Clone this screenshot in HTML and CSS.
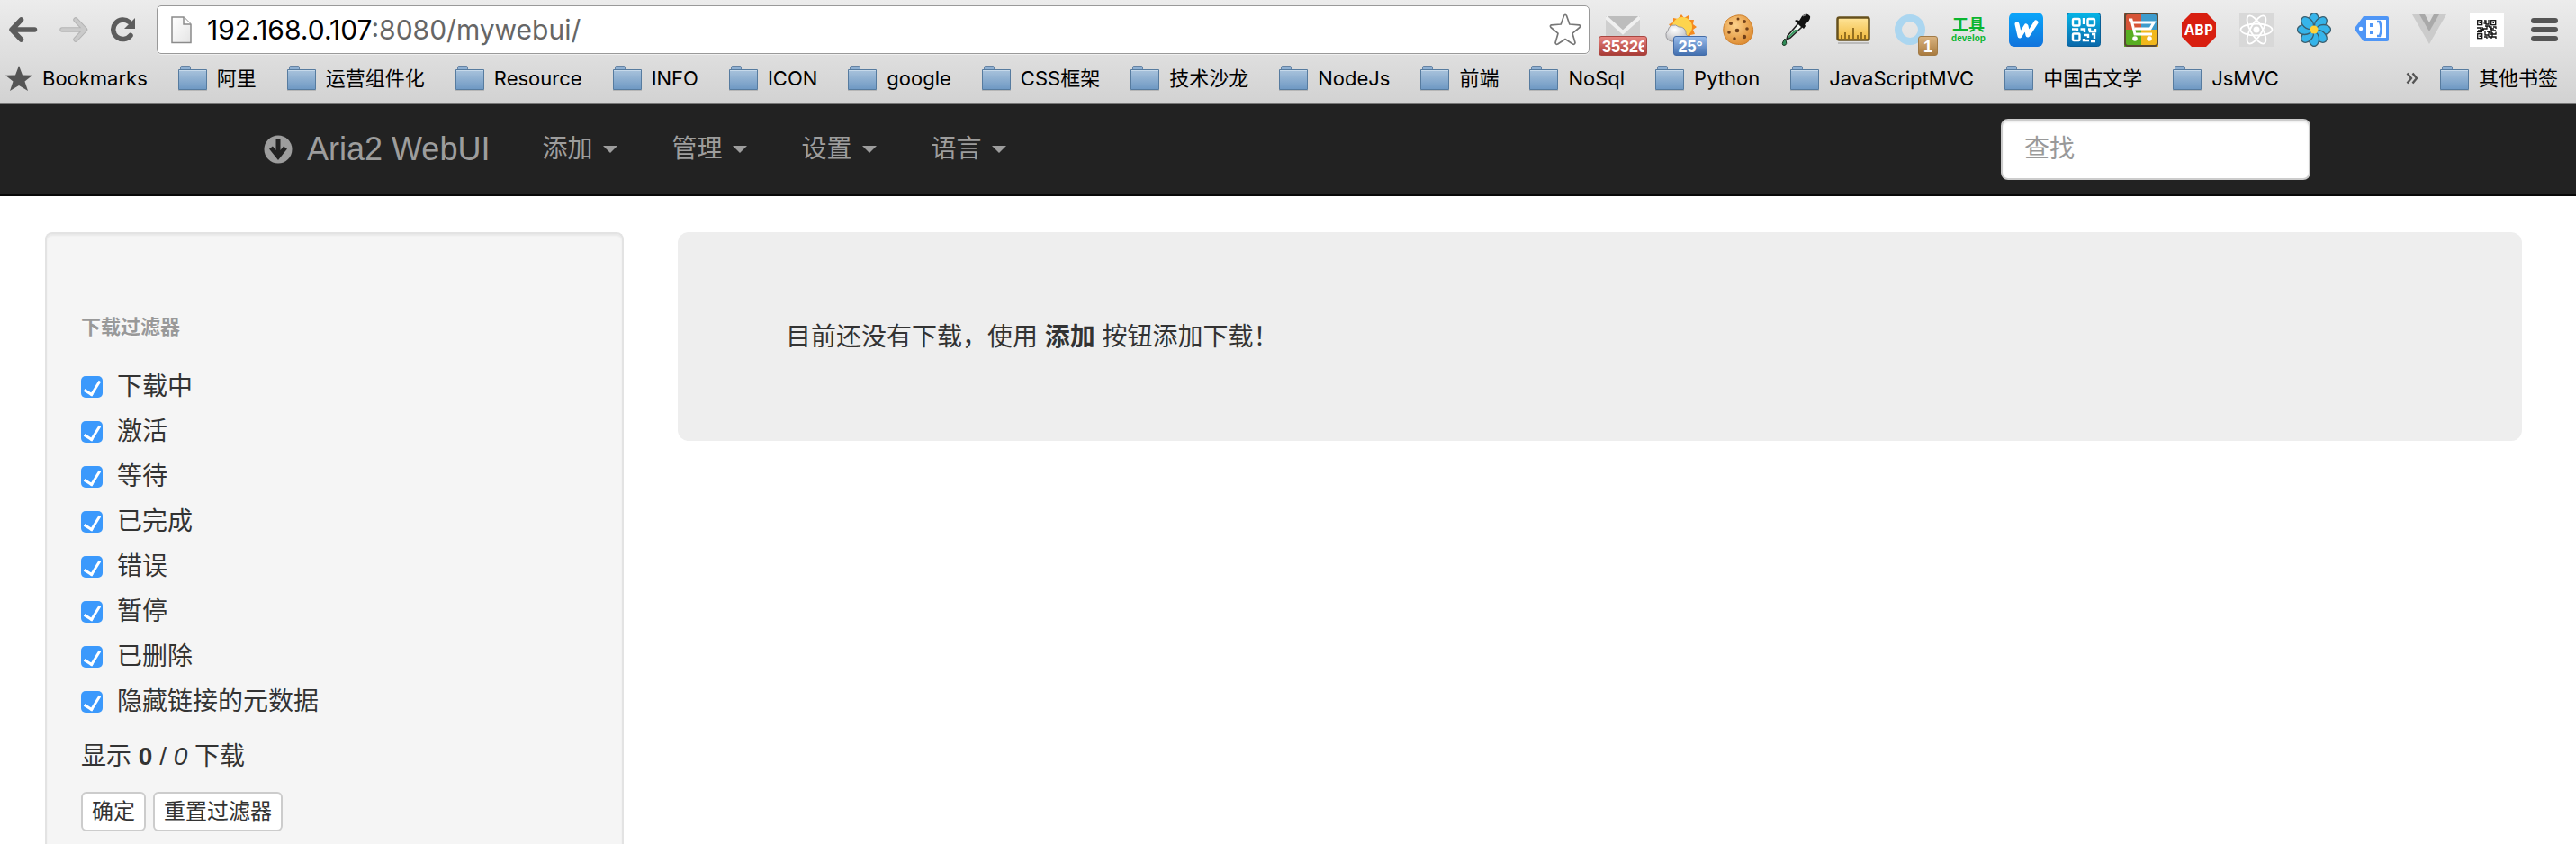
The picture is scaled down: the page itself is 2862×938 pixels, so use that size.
FILE: index.html
```html
<!DOCTYPE html>
<html lang="zh-CN">
<head>
<meta charset="utf-8">
<title>Aria2 WebUI</title>
<link rel="stylesheet" href="styles.css">
</head>
<body>
<svg class="defs" aria-hidden="true">
  <defs>
    <linearGradient id="folder-fill" x1="0" y1="0" x2="0" y2="1"><stop offset="0" stop-color="#a9c3dc"/><stop offset="1" stop-color="#6e98c3"/></linearGradient>
    <linearGradient id="blue-fill" x1="0" y1="0" x2="0" y2="1"><stop offset="0" stop-color="#0aa6fa"/><stop offset="1" stop-color="#1173dc"/></linearGradient>
    <linearGradient id="teal-fill" x1="0" y1="0" x2="0" y2="1"><stop offset="0" stop-color="#06b4e6"/><stop offset="1" stop-color="#0a68aa"/></linearGradient>
    <linearGradient id="page-fill" x1="0" y1="0" x2="1" y2="1"><stop offset="0" stop-color="#fff"/><stop offset="1" stop-color="#e4e4e4"/></linearGradient>
    <linearGradient id="gold-fill" x1="0" y1="0" x2="0" y2="1"><stop offset="0" stop-color="#ffe59a"/><stop offset="1" stop-color="#f0b93c"/></linearGradient>
    <radialGradient id="cookie-fill" cx=".4" cy=".35" r=".7"><stop offset="0" stop-color="#fcd18a"/><stop offset="1" stop-color="#dd8a2f"/></radialGradient>
    <radialGradient id="cloud-fill" cx=".4" cy=".3" r=".8"><stop offset="0" stop-color="#fff"/><stop offset="1" stop-color="#b4b4b8"/></radialGradient>
    <symbol id="folder" viewBox="0 0 32 28">
      <path d="M2.500 5V2Q2.500 .5 4 .5H12Q13.500 .5 13.500 2V5Z" fill="#8fb0d2" stroke="#6683a3"/>
      <path d="M.5 4.500H31.500V26.500H.5Z" fill="url(#folder-fill)" stroke="#567b9f"/>
      <path d="M1 5.500H31" stroke="#c6d9ea"/><path d="M0 27.500H32" stroke="#aaa" opacity=".7"/>
    </symbol>
  </defs>
</svg>

<header class="browser">
  <div class="toolbar">
    <div class="history">
      <button type="button" class="tool" aria-label="后退"><svg width="32" height="28" viewBox="0 0 32 28"><path d="M13.500 3 3 14 13.500 25M4 14H28.500" fill="none" stroke="#5c5c5c" stroke-width="5.500" stroke-linecap="round" stroke-linejoin="round"/></svg></button>
      <button type="button" class="tool" aria-label="前进"><svg width="32" height="28" viewBox="0 0 32 28"><path d="M18 3 28.500 14 18 25M28 14H3" fill="none" stroke="#b4b4b4" stroke-width="5.500" stroke-linecap="round" stroke-linejoin="round"/><path d="M18 3 28.500 14 18 25M28 14H3" fill="none" stroke="#cacaca" stroke-width="3.500" stroke-linecap="round" stroke-linejoin="round"/></svg></button>
      <button type="button" class="tool" aria-label="重新加载"><svg width="30" height="28" viewBox="0 0 30 28"><path d="M23 20.500A10.800 10.800 0 1 1 21.500 5.500" fill="none" stroke="#5c5c5c" stroke-width="5.500" stroke-linecap="round"/><path d="M28 1V13H16Z" fill="#5c5c5c"/></svg></button>
    </div>
    <div class="address">
      <svg width="23" height="31" viewBox="0 0 23 31"><path d="M1 1H14L22 9V29.500H1Z" fill="url(#page-fill)" stroke="#8b8b8b" stroke-width="1.500"/><path d="M14 1V9H22" fill="#fff" stroke="#8b8b8b" stroke-width="1.500"/></svg>
      <div class="url"><span class="url-host">192.168.0.107</span>:8080/mywebui/</div>
      <button type="button" class="tool" aria-label="添加书签"><svg width="36" height="36" viewBox="0 0 36 36"><path d="M16.500 2.500Q18 0 19.500 2.500L22.800 12 33.500 12.800Q35.500 13.800 34 15.500L26 22.200 29 32.500Q28.500 35 26.300 34L18 28.500 9.700 34Q7.500 35 7 32.500L10 22.200 2 15.500Q.5 13.800 2.500 12.800L13.200 12Z" fill="#fff" stroke="#777" stroke-width="1.700" stroke-linejoin="round"/></svg></button>
    </div>
    <div class="extensions">
      <button type="button" class="ext" aria-label="邮件"><svg width="38" height="38" viewBox="0 0 38 38"><path d="M0 4H38V34H0Z" fill="#cfcfcf"/><path d="M0 4H38L19 22Z" fill="#bdbdbd"/><path d="M0 5 19 22 38 5" fill="none" stroke="#f0f0f0" stroke-width="4"/></svg><span class="badge badge-red"><span class="badge-count">35326</span></span></button>
      <button type="button" class="ext" aria-label="天气"><svg width="38" height="38" viewBox="0 0 38 38"><path d="M20 2l3 4 5-3 1 5 5 0-1 5 4 3-4 3 2 5-5 1-1 5-5-2-4 3-4-4-5 1 0-5-5-2 3-4-3-4 5-2 0-5 5 1Z" fill="#f58a1f"/><circle cx="21" cy="16" r="11" fill="#fdd44e"/><path d="M9 32A7 7 0 0 1 5 20 7 7 0 0 1 17 16 7 7 0 0 1 25 24 5 5 0 0 1 25 32Z" fill="url(#cloud-fill)" stroke="#9a9a9e"/></svg><span class="badge badge-blue">25°</span></button>
      <button type="button" class="ext" aria-label="Cookie"><svg width="38" height="38" viewBox="0 0 38 38"><path d="M18 3C25 2 30 5 33 11 37 18 36 24 33 29 28 36 22 36 16 35 8 34 4 28 3 22 2 14 5 5 18 3Z" fill="url(#cookie-fill)" stroke="#cd7f2c"/><g fill="#70401a"><circle cx="11" cy="12" r="2"/><circle cx="19" cy="7" r="1.500"/><circle cx="26" cy="10" r="2"/><circle cx="18" cy="20" r="2.300"/><circle cx="29" cy="18" r="1.800"/><circle cx="9" cy="22" r="1.800"/><circle cx="26" cy="27" r="2.200"/><circle cx="15" cy="29" r="1.800"/></g></svg></button>
      <button type="button" class="ext" aria-label="取色"><svg width="38" height="38" viewBox="0 0 38 38"><path d="M22 12 10 26 9 30 13 28 26 16Z" fill="#f3f7f4" stroke="#222" stroke-width="1.600"/><path d="M18 19 11 26.500 10.500 29 13 27 22 19Z" fill="#3a9a62"/><path d="M18 9 28 18 30 15 29 13Q36 9 35 4 31-1 26 4L23 9 20 8Z" fill="#111"/><path d="M27 4Q29 2 31 3" fill="none" stroke="#888" stroke-width="1.500"/><path d="M7 29Q2 36 6 36.500 11 36 7 29Z" fill="#2f8b57" stroke="#16351f"/></svg></button>
      <button type="button" class="ext" aria-label="标尺"><svg width="38" height="38" viewBox="0 0 38 38"><path d="M2 34H36" stroke="#bbb" stroke-width="2"/><rect x="1.500" y="5.500" width="35" height="25" rx="2" fill="url(#gold-fill)" stroke="#66501c" stroke-width="2.500"/><path d="M6 29V25M10 29V22M14 29V25M19 29V17M24 29V25M28 29V22M32 29V25" stroke="#8a661b" stroke-width="1.800"/></svg></button>
      <button type="button" class="ext" aria-label="环形"><svg width="38" height="38" viewBox="0 0 38 38"><circle cx="18" cy="19" r="13" fill="none" stroke="#abd6f0" stroke-width="8"/></svg><span class="badge badge-tan">1</span></button>
      <button type="button" class="ext ext-text"><span class="dev-cn">工具</span><span class="dev-en">develop</span></button>
      <button type="button" class="ext" aria-label="W"><svg width="38" height="38" viewBox="0 0 38 38"><rect width="38" height="38" rx="6" fill="url(#blue-fill)"/><path d="M9 13 12 26 19 15 21 25 30 11" fill="none" stroke="#fff" stroke-width="5" stroke-linejoin="round" stroke-linecap="round"/></svg></button>
      <button type="button" class="ext" aria-label="二维码"><svg width="38" height="38" viewBox="0 0 38 38"><rect x=".5" y=".5" width="37" height="37" rx="3" fill="url(#teal-fill)" stroke="#0a5f96"/><g fill="none" stroke="#fff" stroke-width="2.400"><rect x="7" y="7" width="7.500" height="7.500" rx="1"/><rect x="23.500" y="7" width="7.500" height="7.500" rx="1"/><rect x="7" y="23.500" width="7.500" height="7.500" rx="1"/><path d="M19 6V13M6 18.500H12V21M15.500 18.500H20V22M24 18.500H26V21H32V18M19 25H24V28M28 24H31V29M19 29V31H25M27 32H32"/></g></svg></button>
      <button type="button" class="ext" aria-label="购物"><svg width="38" height="38" viewBox="0 0 38 38"><path d="M0 0H19V19H0Z" fill="#d65437"/><path d="M19 0H38V19H19Z" fill="#3d9bcc"/><path d="M0 19H19V38H0Z" fill="#58ae21"/><path d="M19 19H38V38H19Z" fill="#f1b71c"/><rect x="1" y="1" width="36" height="36" rx="3" fill="none" stroke="#5a4a36" stroke-width="2"/><path d="M5 8H8L12 24H31M9 11H33L29 18H12" fill="none" stroke="#fff" stroke-width="3"/><circle cx="12" cy="29" r="2.800" fill="#fff"/><circle cx="28" cy="29" r="2.800" fill="#fff"/></svg></button>
      <button type="button" class="ext" aria-label="Adblock Plus"><svg width="38" height="38" viewBox="0 0 38 38"><path d="M11 0H27L38 11V27L27 38H11L0 27V11Z" fill="#d81f10"/><text x="19" y="25" class="abp">ABP</text></svg></button>
      <button type="button" class="ext" aria-label="React"><svg width="38" height="38" viewBox="0 0 38 38"><path d="M0 0H38V38H0Z" fill="#d8d8d8"/><g fill="none" stroke="#fff" stroke-width="1.800"><ellipse cx="19" cy="19" rx="17.500" ry="6.500"/><ellipse cx="19" cy="19" rx="17.500" ry="6.500" transform="rotate(60 19 19)"/><ellipse cx="19" cy="19" rx="17.500" ry="6.500" transform="rotate(120 19 19)"/></g><circle cx="19" cy="19" r="3.500" fill="#fff"/></svg></button>
      <button type="button" class="ext" aria-label="花"><svg width="38" height="38" viewBox="0 0 38 38"><g fill="#36b4ea" stroke="#3a5f70" stroke-width="1.300"><ellipse cx="19" cy="8.500" rx="5.500" ry="8"/><ellipse cx="19" cy="8.500" rx="5.500" ry="8" transform="rotate(45 19 19)"/><ellipse cx="19" cy="8.500" rx="5.500" ry="8" transform="rotate(90 19 19)"/><ellipse cx="19" cy="8.500" rx="5.500" ry="8" transform="rotate(135 19 19)"/><ellipse cx="19" cy="8.500" rx="5.500" ry="8" transform="rotate(180 19 19)"/><ellipse cx="19" cy="8.500" rx="5.500" ry="8" transform="rotate(225 19 19)"/><ellipse cx="19" cy="8.500" rx="5.500" ry="8" transform="rotate(270 19 19)"/><ellipse cx="19" cy="8.500" rx="5.500" ry="8" transform="rotate(315 19 19)"/></g><circle cx="19" cy="19" r="4.500" fill="#ffd23a"/></svg></button>
      <button type="button" class="ext" aria-label="标签"><svg width="38" height="38" viewBox="0 0 38 38"><path d="M10 4H36Q38 4 38 6V30Q38 32 36 32H10L1 20Q0 18 1 16Z" fill="#4f96f6"/><path d="M13 8H35V28H13Z" fill="#fff"/><circle cx="7" cy="18" r="2.200" fill="#fff"/><path d="M17 12H21V16H17ZM17 20H21V24H17Z" fill="#4f96f6"/><path d="M25 10H28Q31 18 28 26H25" fill="none" stroke="#4f96f6" stroke-width="2.500"/></svg></button>
      <button type="button" class="ext" aria-label="Vue"><svg width="38" height="38" viewBox="0 0 38 38"><path d="M0 2H38L19 35Z" fill="#cbcbcb"/><path d="M8 2H30L19 21Z" fill="#a9a9a9"/><path d="M14 2H24L19 11Z" fill="#dedede"/></svg></button>
      <button type="button" class="ext" aria-label="二维码生成"><svg width="38" height="38" viewBox="0 0 38 38"><path d="M0 0H38V38H0Z" fill="#fff"/><g fill="none" stroke="#111" stroke-width="1.300"><rect x="8.700" y="8.700" width="5" height="5"/><rect x="23.700" y="8.700" width="5" height="5"/><rect x="8.700" y="23.700" width="5" height="5"/><path d="M16 9H18V13H21V8M17 15H22M15.500 12H18M8 17H12V19H16M14 16V20H9M14 18H19V15M21 16H24V20H29M26 16H29V18M22 18H27M17 20V25H21V22H25M8 21.500H14M23 24H29V21.500M16 27H19V29M21 25V27H24V29M25 22V27H29V29M19 21H23"/></g><path d="M10.500 10.500H12V12H10.500ZM25.500 10.500H27V12H25.500ZM10.500 25.500H12V27H10.500Z" fill="#111"/></svg></button>
    </div>
    <button type="button" class="tool" aria-label="菜单"><svg width="30" height="28" viewBox="0 0 30 28"><path d="M3 4H27M3 14H27M3 24H27" stroke="#555" stroke-width="6" stroke-linecap="round"/></svg></button>
  </div>

  <nav class="bookmarks" aria-label="书签">
    <a href="#" class="bookmark"><svg width="30" height="28" viewBox="0 0 30 28"><path d="M15 0 19 10.500 30 10.700 21.500 17.500 25 28 15 22 5 28 8.500 17.500 0 10.700 11 10.500Z" fill="#555"/></svg>Bookmarks</a>
    <a href="#" class="bookmark"><svg width="32" height="28"><use href="#folder"/></svg>阿里</a>
    <a href="#" class="bookmark"><svg width="32" height="28"><use href="#folder"/></svg>运营组件化</a>
    <a href="#" class="bookmark"><svg width="32" height="28"><use href="#folder"/></svg>Resource</a>
    <a href="#" class="bookmark"><svg width="32" height="28"><use href="#folder"/></svg>INFO</a>
    <a href="#" class="bookmark"><svg width="32" height="28"><use href="#folder"/></svg>ICON</a>
    <a href="#" class="bookmark"><svg width="32" height="28"><use href="#folder"/></svg>google</a>
    <a href="#" class="bookmark"><svg width="32" height="28"><use href="#folder"/></svg>CSS框架</a>
    <a href="#" class="bookmark"><svg width="32" height="28"><use href="#folder"/></svg>技术沙龙</a>
    <a href="#" class="bookmark"><svg width="32" height="28"><use href="#folder"/></svg>NodeJs</a>
    <a href="#" class="bookmark"><svg width="32" height="28"><use href="#folder"/></svg>前端</a>
    <a href="#" class="bookmark"><svg width="32" height="28"><use href="#folder"/></svg>NoSql</a>
    <a href="#" class="bookmark"><svg width="32" height="28"><use href="#folder"/></svg>Python</a>
    <a href="#" class="bookmark"><svg width="32" height="28"><use href="#folder"/></svg>JavaScriptMVC</a>
    <a href="#" class="bookmark"><svg width="32" height="28"><use href="#folder"/></svg>中国古文学</a>
    <a href="#" class="bookmark"><svg width="32" height="28"><use href="#folder"/></svg>JsMVC</a>
    <div class="bookmarks-end">
      <button type="button" class="tool" aria-label="更多书签"><svg width="14" height="14" viewBox="0 0 14 14"><path d="M1.500 1.500 6 7 1.500 12.500M7.500 1.500 12 7 7.500 12.500" fill="none" stroke="#555" stroke-width="2.400"/></svg></button>
      <a href="#" class="bookmark"><svg width="32" height="28"><use href="#folder"/></svg>其他书签</a>
    </div>
  </nav>
</header>

<nav class="navbar">
  <div class="navbar-inner">
    <a href="#" class="brand"><svg width="32" height="32" viewBox="0 0 32 32"><circle cx="16" cy="16" r="15.500" fill="#9d9d9d"/><path d="M16 5V20M8 14 16 24 24 14" fill="none" stroke="#222" stroke-width="5"/></svg>Aria2 WebUI</a>
    <ul class="menu">
      <li><button type="button" class="menu-item">添加<span class="caret"></span></button></li>
      <li><button type="button" class="menu-item">管理<span class="caret"></span></button></li>
      <li><button type="button" class="menu-item">设置<span class="caret"></span></button></li>
      <li><button type="button" class="menu-item">语言<span class="caret"></span></button></li>
    </ul>
    <input type="text" class="search" placeholder="查找" aria-label="查找">
  </div>
</nav>

<main class="page">
  <aside class="column column-side">
    <form class="well">
      <h2 class="filter-title">下载过滤器</h2>
      <label class="check"><input type="checkbox" checked>下载中</label>
      <label class="check"><input type="checkbox" checked>激活</label>
      <label class="check"><input type="checkbox" checked>等待</label>
      <label class="check"><input type="checkbox" checked>已完成</label>
      <label class="check"><input type="checkbox" checked>错误</label>
      <label class="check"><input type="checkbox" checked>暂停</label>
      <label class="check"><input type="checkbox" checked>已删除</label>
      <label class="check"><input type="checkbox" checked>隐藏链接的元数据</label>
      <p class="count">显示 <strong>0</strong> / <em>0</em> 下载</p>
      <div class="actions">
        <button type="button" class="btn">确定</button>
        <button type="button" class="btn">重置过滤器</button>
      </div>
    </form>
  </aside>
  <section class="column column-main">
    <div class="jumbotron">目前还没有下载，使用 <strong>添加</strong> 按钮添加下载！</div>
  </section>
</main>
</body>
</html>
```
FILE: styles.css
```css
* { box-sizing: border-box; }

html, body { height: 100%; }

body {
  margin: 0;
  display: flex;
  flex-direction: column;
  overflow: hidden;
  background: #fff;
  color: #333;
  font: 28px/42px "Liberation Sans", "Noto Sans CJK SC", sans-serif;
}

button, input { font: inherit; }
button { border: 0; padding: 0; background: none; }
a { color: inherit; text-decoration: none; }
svg { display: block; flex: none; }
.defs { position: absolute; width: 0; height: 0; }

/* Browser chrome */
.browser {
  flex: none;
  background: linear-gradient(#ececec, #d2d2d2);
  border-bottom: 1px solid #777;
  font-family: Inter, "Noto Sans CJK SC", sans-serif;
  color: #000;
}

.toolbar {
  display: flex;
  align-items: center;
  padding: 6px 20px 0 10px;
}

.history { display: flex; gap: 24px; width: 164px; }

.address {
  flex: 1;
  display: flex;
  align-items: center;
  gap: 17px;
  height: 54px;
  margin-right: 18px;
  padding: 0 8px 0 15px;
  background: #fff;
  border: 1px solid #999;
  border-radius: 5px;
  box-shadow: 0 1px 0 #f0f0f0;
}

.url { flex: 1; font-size: 30px; color: #666; }
.url-host { color: #000; }

.extensions { display: flex; gap: 26px; margin-right: 30px; }
.ext { position: relative; width: 38px; height: 38px; }

.badge {
  position: absolute;
  top: 26px;
  height: 22px;
  padding: 0 3px;
  border: 1px solid;
  border-radius: 3px;
  color: #fff;
  font: bold 18px/22px "Liberation Sans", sans-serif;
}
.badge-count { display: block; overflow: hidden; }
.badge-red { left: -8px; width: 54px; background: linear-gradient(#e7857f, #a93c37); border-color: #a84641; }
.badge-blue { right: -11px; width: 38px; background: linear-gradient(#98bbea, #4370b0); border-color: #446ca6; }
.badge-tan { right: -11px; width: 22px; background: linear-gradient(#d9b380, #a97b3f); border-color: #a17a46; text-align: center; }

.ext-text {
  display: flex;
  flex-direction: column;
  align-items: center;
  justify-content: center;
  color: #0ab52f;
}
.dev-cn { font: bold 18px/19px "Noto Sans CJK SC", sans-serif; }
.dev-en { font: bold 10px/14px "Liberation Sans", sans-serif; }
.abp { font: bold 16px "Open Sans", sans-serif; fill: #fff; text-anchor: middle; }

.bookmarks {
  display: flex;
  align-items: center;
  height: 55px;
  padding: 0 20px 2px 6px;
  gap: 34px;
  font-size: 22px;
  line-height: 30px;
}
.bookmark { display: flex; align-items: center; gap: 11px; white-space: nowrap; }
.bookmarks-end { display: flex; align-items: center; gap: 24px; margin-left: auto; }

/* Application bar */
.navbar {
  flex: none;
  background: #222;
  border-bottom: 2px solid #080808;
  color: #9d9d9d;
}
.navbar-inner {
  display: flex;
  align-items: center;
  max-width: 2340px;
  height: 100px;
  margin: 0 auto;
  padding: 0 34px 0 32px;
}
.brand { display: flex; align-items: center; gap: 16px; margin-right: 28px; font-size: 36px; }
.menu { display: flex; margin: 0; padding: 0; list-style: none; }
.menu-item { display: flex; align-items: center; gap: 12px; padding: 30px; color: inherit; }
.caret { border: 8px solid transparent; border-top-color: currentColor; border-bottom: 0; }
.search {
  width: 344px;
  height: 68px;
  margin-left: auto;
  padding: 12px 24px;
  border: 2px solid #ccc;
  border-radius: 8px;
  background: #fff;
  box-shadow: inset 0 2px 2px rgba(0, 0, 0, .08);
}
.search::placeholder { color: #999; opacity: 1; }

/* Content */
.page { flex: 1; display: flex; min-height: 0; padding: 40px 30px 0 20px; }
.column { padding: 0 30px; }
.column-side { width: 25%; }
.column-main { flex: 1; }

.well {
  min-height: 100%;
  padding: 78px 38px 38px;
  border: 2px solid #e3e3e3;
  border-bottom: 0;
  border-radius: 8px 8px 0 0;
  background: #f5f5f5;
  box-shadow: inset 0 2px 2px rgba(0, 0, 0, .05);
}
.filter-title {
  margin: 0 0 20px;
  padding: 6px 0;
  color: #999;
  font-size: 22px;
  line-height: 40px;
  text-shadow: 0 2px 0 rgba(255, 255, 255, .5);
}
.check { display: flex; align-items: center; gap: 16px; height: 40px; margin-bottom: 10px; }
.check input {
  appearance: none;
  width: 24px;
  height: 24px;
  margin: 0;
  border-radius: 5px;
  background: #3b99fc;
}
.check input::before {
  content: "";
  display: block;
  width: 8px;
  height: 16px;
  margin: 2px auto 0;
  border: solid #fff;
  border-width: 0 3px 3px 0;
  transform: rotate(32deg);
}
.count { margin: 20px 0 18px; }
.actions { display: flex; gap: 8px; }
.btn {
  height: 44px;
  padding: 0 10px;
  border: 2px solid #ccc;
  border-radius: 6px;
  background: #fff;
  color: #333;
  font-size: 24px;
  line-height: 38px;
}

.jumbotron { padding: 96px 120px 94px; border-radius: 12px; background: #eee; }
```
